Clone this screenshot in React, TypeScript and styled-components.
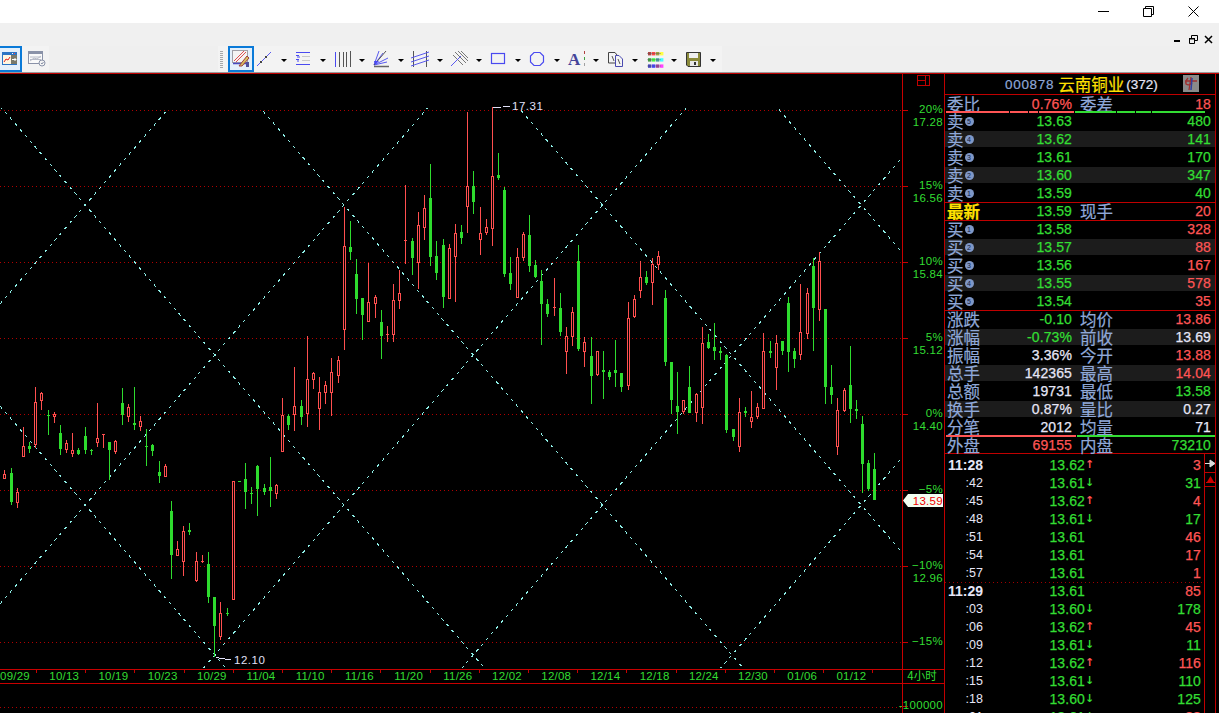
import React from "react";
import styled, { createGlobalStyle } from "styled-components";

const Global = createGlobalStyle`
  html, body { margin: 0; padding: 0; background: #000; overflow: hidden; }
  #root { width: 1219px; height: 713px; overflow: hidden; }
`;

const GREEN = "#33dd33";
const RED = "#ff5555";
const BLUE = "#8fa8d8";
const WHITE = "#e6e6f6";
const YELLOW = "#ffe000";

const Page = styled.div`
  width: 1219px;
  height: 713px;
  display: flex;
  flex-direction: column;
  background: #000;
  overflow: hidden;
  font-family: "Liberation Sans", "Noto Sans CJK SC", sans-serif;
`;
const TitleBar = styled.div`
  height: 23px;
  background: #fff;
  display: flex;
  justify-content: flex-end;
  align-items: center;
  padding-right: 20px;
  gap: 34px;
  flex: none;
`;
const MenuBar = styled.div`
  height: 23px;
  background: #f0f0f0;
  display: flex;
  justify-content: flex-end;
  align-items: flex-start;
  padding: 12px 6px 0 0;
  box-sizing: border-box;
  gap: 6px;
  flex: none;
`;
const ToolBar = styled.div`
  height: 26px;
  background: #efefef;
  display: flex;
  flex: none;
`;
const LeftTools = styled.div`
  width: 49px;
  background: #f3f3f3;
  display: flex;
  align-items: center;
`;
const RightTools = styled.div`
  margin-left: 169px;
  width: 504px;
  background: #f3f3f3;
  display: flex;
  align-items: center;
`;
const ActiveBox = styled.div<{ $w: number }>`
  width: ${(p) => p.$w}px;
  height: 26px;
  box-sizing: border-box;
  border: 2px solid #0a7ad8;
  background: #e4f0fb;
  display: flex;
  align-items: center;
  justify-content: center;
  flex: none;
`;
const EdgeBox = styled(ActiveBox)`
  border-left: none;
`;
const PlainIcon = styled.div`
  width: 22px;
  height: 26px;
  margin-left: 4px;
  display: flex;
  align-items: center;
  justify-content: center;
`;
const Grip = styled.div`
  width: 3px;
  height: 17px;
  margin: 0 5px 0 2px;
  background: repeating-linear-gradient(#a8a8a8 0 1px, transparent 1px 2px);
`;
const ToolButton = styled.div`
  width: 39px;
  height: 26px;
  display: flex;
  align-items: center;
  flex: none;
`;
const ToolGlyph = styled.div`
  width: 20px;
  height: 20px;
  flex: none;
`;
const Caret = styled.span`
  width: 0;
  height: 0;
  margin: 2px 0 0 7px;
  border-left: 3px solid transparent;
  border-right: 3px solid transparent;
  border-top: 3px solid #000;
`;
const Rule = styled.div`
  height: 1px;
  background: #9a9a9a;
  flex: none;
`;
const Main = styled.div`
  flex: 1;
  display: flex;
  min-height: 0;
  border-top: 1px solid #c00000;
`;
const ChartSvg = styled.svg`
  width: 944px;
  height: 639px;
  display: block;
  flex: none;
  background: #000;
`;
const Side = styled.div`
  width: 270px;
  flex: none;
  border-left: 1px solid #c00000;
  border-right: 1px solid #c00000;
  display: flex;
  flex-direction: column;
  overflow: hidden;
  font-size: 14px;
`;
const Head = styled.div`
  height: 20px;
  flex: none;
  border-bottom: 1px solid #c00000;
  display: flex;
  align-items: center;
  padding-left: 60px;
  position: relative;
`;
const Code = styled.span`
  color: ${BLUE};
  font-size: 13.5px;
  letter-spacing: 0.7px;
  -webkit-text-stroke: 0.2px currentColor;
`;
const Name = styled.span`
  color: ${YELLOW};
  font-size: 16.5px;
  margin-left: 4px;
  font-family: "Noto Sans CJK SC", sans-serif;
  -webkit-text-stroke: 0.2px currentColor;
`;
const Count = styled.span`
  color: ${WHITE};
  font-size: 13.5px;
  margin-left: 2px;
  -webkit-text-stroke: 0.2px currentColor;
`;
const HeadIcon = styled.div`
  position: absolute;
  left: 238px;
  top: 1px;
  width: 16px;
  height: 17px;
`;
const Section = styled.div<{ $h: number; $line?: boolean; $shift?: boolean }>`
  height: ${(p) => p.$h}px;
  flex: none;
  box-sizing: border-box;
  ${(p) => (p.$line ? "border-bottom: 1px solid #c00000;" : "")}
  ${(p) => (p.$shift ? "> :first-child { margin-top: -1px; }" : "")}
  position: relative;
`;
const Row = styled.div<{ $alt?: boolean }>`
  height: 18px;
  position: relative;
  ${(p) =>
    p.$alt
      ? `background: linear-gradient(#1c1c1c, #1c1c1c) no-repeat; background-size: 100% 16px; background-position: 0 1px;`
      : ""}
`;
const RowInner = styled.div`
  display: grid;
  grid-template-columns: 127px 8px 50px 81px;
  align-items: center;
  height: 18px;
  line-height: 18px;
`;
const FirstCol = styled.div`
  display: flex;
  align-items: center;
  justify-content: space-between;
  padding-left: 2px;
`;
const Label = styled.span<{ $c?: string; $bold?: boolean }>`
  color: ${(p) => p.$c || BLUE};
  font-size: 16.5px;
  font-family: "Noto Sans CJK SC", sans-serif;
  font-weight: ${(p) => (p.$bold ? 700 : 400)};
  line-height: 18px;
  white-space: nowrap;
  -webkit-text-stroke: 0.2px currentColor;
`;
const Num = styled.span<{ $c: string }>`
  color: ${(p) => p.$c};
  font-size: 14px;
  letter-spacing: 0.1px;
  white-space: nowrap;
  text-align: right;
  -webkit-text-stroke: 0.25px currentColor;
`;
const Spacer = styled.span``;
const LevelLabel = styled.div`
  display: flex;
  align-items: center;
  gap: 1px;
`;
const Dot = styled.span`
  width: 9px;
  height: 9px;
  border-radius: 50%;
  background: #7f98c8;
  color: #10183a;
  font-size: 7px;
  line-height: 9px;
  text-align: center;
`;
const SplitBar = styled.div`
  position: absolute;
  left: 1px;
  right: 0;
  display: flex;
  height: 2px;
  gap: 1px;
`;
const Seg = styled.i<{ $c: string; $w: number }>`
  display: block;
  height: 2px;
  background: ${(p) => p.$c};
  width: ${(p) => p.$w}px;
  flex: none;
`;
const Ticks = styled.div`
  flex: 1;
  display: flex;
  min-height: 0;
  overflow: hidden;
`;
const TickList = styled.div`
  width: 259px;
  flex: none;
  padding-top: 2px;
`;
const TickRow = styled.div<{ $sep?: boolean }>`
  height: 18px;
  display: grid;
  grid-template-columns: 38px 102px 10px 106px;
  align-items: center;
  line-height: 18px;
  ${(p) =>
    p.$sep
      ? `background: repeating-linear-gradient(90deg, #a00000 0 1px, transparent 1px 4px) no-repeat 0 0 / 100% 1px;`
      : ""}
`;
const Time = styled.span<{ $main?: boolean }>`
  color: ${WHITE};
  text-align: right;
  font-size: ${(p) => (p.$main ? "14px" : "12.5px")};
  font-weight: ${(p) => (p.$main ? 700 : 400)};
`;
const Mark = styled.span<{ $c: string }>`
  color: ${(p) => p.$c};
  font-size: 11px;
  font-weight: 700;
  font-family: "DejaVu Sans", sans-serif;
`;
const ScrollCol = styled.div`
  flex: 1;
  border-left: 1px solid #c00000;
  display: flex;
  flex-direction: column;
`;
const ScrollCell = styled.div<{ $h: number }>`
  height: ${(p) => p.$h}px;
  flex: none;
  border-bottom: 1px solid #c00000;
  display: flex;
  align-items: center;
  justify-content: center;
`;

type C = [number, number, number, number, number, "r" | "g"];
const candles: C[] = [
  [4,470,479,474,478,"r"],[11,468,505,473,502,"g"],[17,488,508,492,502,"r"],[23,427,456,446,456,"r"],
  [29,442,453,446,449,"g"],[35,387,448,402,444,"r"],[41,392,410,393,400,"r"],[48,410,435,415,415,"g"],
  [54,412,423,414,416,"r"],[60,425,455,433,449,"g"],[66,440,453,443,449,"r"],[72,433,457,450,453,"r"],
  [78,448,455,450,454,"g"],[85,427,454,436,450,"g"],[91,449,455,450,450,"g"],[97,403,447,438,442,"r"],
  [103,434,448,434,434,"r"],[109,442,480,442,450,"g"],[115,440,454,441,451,"r"],[122,388,425,403,415,"g"],
  [128,404,422,407,416,"r"],[134,387,430,423,425,"g"],[140,416,431,421,426,"r"],[146,429,466,446,446,"g"],
  [152,444,456,445,451,"g"],[159,461,483,472,476,"g"],[165,464,476,466,476,"r"],[171,501,579,511,555,"g"],
  [177,541,556,549,555,"r"],[183,526,576,531,561,"r"],[189,523,535,530,532,"g"],[196,552,582,561,580,"r"],
  [202,555,563,561,561,"r"],[208,552,603,564,597,"g"],[214,597,657,597,626,"g"],[220,602,640,613,636,"r"],
  [227,608,616,613,613,"g"],[233,481,599,481,599,"r"],[239,481,481,481,481,"g"],[245,463,509,479,492,"g"],
  [251,487,504,493,493,"g"],[257,465,516,466,489,"g"],[264,484,495,488,492,"g"],[270,457,507,487,491,"g"],
  [276,484,499,485,493,"r"],[282,398,451,415,451,"r"],[288,414,430,416,425,"g"],[294,367,431,406,414,"r"],
  [301,400,425,406,417,"g"],[307,336,427,379,413,"r"],[313,372,389,373,379,"r"],[319,377,430,392,408,"r"],
  [325,381,404,385,392,"r"],[331,358,416,372,392,"r"],[338,356,383,360,375,"r"],[344,207,350,246,329,"r"],
  [350,221,260,247,252,"g"],[356,259,314,274,299,"g"],[362,298,340,298,315,"g"],[368,263,322,302,321,"r"],
  [375,295,318,297,303,"r"],[381,310,359,322,336,"g"],[387,326,342,334,334,"r"],[393,284,342,300,334,"r"],
  [399,270,309,293,300,"r"],[405,185,264,240,240,"r"],[412,238,275,241,258,"g"],[418,212,289,225,262,"r"],
  [424,195,240,208,227,"r"],[430,164,266,198,257,"g"],[436,241,280,256,273,"g"],[443,239,308,245,297,"g"],
  [449,244,299,248,298,"r"],[455,224,302,233,256,"r"],[461,225,244,232,238,"g"],[467,112,233,186,206,"r"],
  [473,171,214,186,202,"g"],[480,207,255,233,239,"r"],[486,219,235,227,232,"r"],[492,107,246,176,228,"r"],
  [498,153,180,175,178,"g"],[504,187,277,190,274,"g"],[510,257,290,273,284,"g"],[517,248,297,257,297,"r"],
  [523,232,261,234,257,"r"],[529,215,272,235,266,"g"],[535,260,278,265,277,"g"],[541,270,345,281,304,"g"],
  [547,299,317,304,314,"g"],[554,278,316,307,307,"r"],[560,293,336,308,332,"g"],[566,327,374,336,351,"r"],
  [572,307,346,312,336,"r"],[578,245,351,261,349,"g"],[584,337,367,342,351,"r"],[591,337,404,356,376,"g"],
  [597,351,376,351,374,"r"],[603,351,399,370,372,"g"],[609,370,380,372,377,"g"],[615,340,387,370,373,"g"],
  [621,373,392,373,387,"g"],[628,302,390,318,385,"r"],[634,295,318,299,316,"r"],[640,261,298,277,290,"r"],
  [646,271,285,277,283,"g"],[652,258,305,264,282,"r"],[658,251,270,256,264,"r"],[665,290,366,298,362,"g"],
  [671,362,414,362,400,"g"],[677,372,434,406,412,"g"],[683,400,414,400,411,"r"],[689,366,413,387,413,"g"],
  [696,393,422,394,412,"r"],[702,327,424,343,407,"r"],[708,334,349,342,348,"g"],[714,323,360,347,351,"g"],
  [720,347,360,351,353,"g"],[726,354,433,355,430,"g"],[733,429,441,429,437,"g"],[739,398,452,412,446,"r"],
  [745,407,417,411,413,"g"],[751,391,428,417,421,"r"],[757,403,419,407,416,"r"],[763,333,408,351,408,"r"],
  [770,341,358,351,353,"g"],[776,335,390,343,367,"r"],[782,341,355,341,351,"g"],[788,297,372,303,352,"g"],
  [794,348,368,351,359,"g"],[800,284,360,332,354,"r"],[807,288,339,293,333,"r"],[813,258,351,266,308,"g"],
  [819,252,321,261,309,"r"],[825,309,404,309,387,"g"],[831,365,404,387,395,"g"],[837,398,455,410,446,"r"],
  [844,388,412,390,410,"r"],[850,346,423,385,409,"g"],[856,400,419,409,411,"g"],[862,416,493,424,464,"g"],
  [868,460,491,463,489,"g"],[874,453,500,469,500,"g"],
];

const Candle = ({ c }: { c: C }) => {
  const [x, hi, lo, t, b, k] = c;
  const col = k === "r" ? "#ff4f4f" : "#2edc2e";
  if (t === b) {
    return (
      <g fill={col}>
        {lo > hi && <rect x={x} y={hi} width={1} height={lo - hi} />}
        <rect x={x - 1} y={t} width={3} height={1} />
      </g>
    );
  }
  if (k === "g") {
    return (
      <g fill={col}>
        <rect x={x} y={hi} width={1} height={lo - hi} />
        <rect x={x - 1} y={t} width={3} height={b - t} />
      </g>
    );
  }
  return (
    <g>
      <rect fill={col} x={x} y={hi} width={1} height={Math.max(0, t - hi)} />
      <rect fill={col} x={x} y={b} width={1} height={Math.max(0, lo - b)} />
      <rect x={x - 0.5} y={t + 0.5} width={2} height={b - t} fill="#000" stroke={col} strokeWidth={1} />
    </g>
  );
};

const SLOPE = 1.16;
const rising = [304, 604, 904, 1204, 1504, 1804];
const falling = [406, 106, -194, -494, -794, -1094];
const gridY = [110, 186, 262, 338, 414, 490, 566, 642, 707];
const tickY = [110, 186, 262, 338, 414, 490, 566, 642, 706];
const dates = ["09/29","10/13","10/19","10/23","10/29","11/04","11/10","11/16","11/20","11/26","12/02","12/08","12/14","12/18","12/24","12/30","01/06","01/12"];
const axis: [string, number][] = [
  ["20%",109],["17.28",122],["15%",185],["16.56",198],["10%",261],["15.84",274],["5%",337],["15.12",350],
  ["0%",413],["14.40",426],["−5%",489],["−10%",565],["12.96",578],["−15%",641],["-100000",705],
];

const AxisText = styled.text`
  font-family: "Liberation Sans", sans-serif;
  font-size: 11.5px;
  letter-spacing: 0.3px;
  text-anchor: end;
  fill: ${GREEN};
`;
const PriceTag = styled(AxisText)`
  fill: #f00000;
`;
const DateText = styled.text`
  font-family: "Liberation Sans", sans-serif;
  font-size: 11.5px;
  letter-spacing: 0.2px;
  text-anchor: middle;
  fill: ${GREEN};
`;
const PeakText = styled.text`
  font-family: "Liberation Sans", sans-serif;
  font-size: 11.5px;
  letter-spacing: 0.5px;
  fill: #e0e0f8;
`;
const SmallCjk = styled.text`
  font-family: "Noto Sans CJK SC", sans-serif;
  font-size: 11.5px;
  text-anchor: middle;
  fill: ${GREEN};
`;

const Chart = () => (
  <ChartSvg viewBox="0 74 944 639">
    <defs>
      <clipPath id="plot">
        <rect x="0" y="108" width="902" height="560" />
      </clipPath>
      <pattern id="reddots" width="4" height="1" patternUnits="userSpaceOnUse">
        <rect width="1" height="1" fill="#b00000" />
      </pattern>
    </defs>
    {gridY.map((y) => (
      <rect key={y} x="0" y={y} width="902" height="1" fill="url(#reddots)" />
    ))}
    <g clipPath="url(#plot)" stroke="#8ff0e8" strokeWidth="1" strokeDasharray="3 4.6" shapeRendering="crispEdges">
      {rising.map((c) => (
        <line key={c} x1={0} y1={c} x2={902} y2={c - 902 * SLOPE} />
      ))}
      {falling.map((d) => (
        <line key={d} x1={0} y1={d} x2={902} y2={d + 902 * SLOPE} />
      ))}
    </g>
    <g shapeRendering="crispEdges">
      {candles.map((c) => (
        <Candle key={c[0]} c={c} />
      ))}
    </g>
    <path d="M492.5 107.5H501M503 106.5H510" stroke="#e0e0f8" fill="none" shapeRendering="crispEdges" />
    <PeakText x="512" y="110">17.31</PeakText>
    <path d="M216 657.5L222 658.5H224L226 659.5H231" stroke="#e0e0f8" fill="none" shapeRendering="crispEdges" />
    <PeakText x="234" y="664">12.10</PeakText>

    <g fill="#c80000" shapeRendering="crispEdges">
      <rect x="902" y="74" width="1" height="639" />
      <rect x="0" y="669" width="944" height="1" />
      <rect x="0" y="683" width="944" height="1" />
      {tickY.map((y) => (
        <rect key={y} x="902" y={y} width="6" height="1" />
      ))}
      {dates.map((_, i) => (
        <rect key={i} x={36 + i * 49.2} y="669" width="1" height="4" />
      ))}
    </g>
    {dates.map((d, i) => (
      <DateText key={d} x={15 + i * 49.2} y="680">{d}</DateText>
    ))}
    {axis.map(([t, y]) => (
      <AxisText key={t} x="943" y={y + 4}>{t}</AxisText>
    ))}
    <path d="M903 500.5L908 494H943V507H908Z" fill="#f2fff2" />
    <PriceTag x="943" y="505">13.59</PriceTag>
    <SmallCjk x="922" y="680">4小时</SmallCjk>
    <path d="M917.5 75.5H929.5V85.5H917.5ZM917.5 80.5H925.5M925.5 75.5V85.5" fill="none" stroke="#c00000" shapeRendering="crispEdges" />
  </ChartSvg>
);

const sells: [string, string, string][] = [["⑤","13.63","480"],["④","13.62","141"],["③","13.61","170"],["②","13.60","347"],["①","13.59","40"]];
const buys: [string, string, string][] = [["①","13.58","328"],["②","13.57","88"],["③","13.56","167"],["④","13.55","578"],["⑤","13.54","35"]];
const DIGIT: Record<string, string> = { "①": "1", "②": "2", "③": "3", "④": "4", "⑤": "5" };
const stats: [string, string, string, string, string, string][] = [
  ["涨跌","-0.10",GREEN,"均价","13.86",RED],
  ["涨幅","-0.73%",GREEN,"前收","13.69",WHITE],
  ["振幅","3.36%",WHITE,"今开","13.88",RED],
  ["总手","142365",WHITE,"最高","14.04",RED],
  ["总额","19731",WHITE,"最低","13.58",GREEN],
  ["换手","0.87%",WHITE,"量比","0.27",WHITE],
  ["分笔","2012",WHITE,"均量","71",WHITE],
];
const ticks: [string, string, "u" | "d" | "", string, string, boolean?][] = [
  ["11:28","13.62","u","3",RED],[":42","13.61","d","31",GREEN],[":45","13.62","u","4",RED],[":48","13.61","d","17",GREEN],
  [":51","13.61","","46",RED],[":54","13.61","","17",RED],[":57","13.61","","1",RED],["11:29","13.61","","85",RED,true],
  [":03","13.60","d","178",GREEN],[":06","13.62","u","45",RED],[":09","13.61","d","11",GREEN],[":12","13.62","u","116",RED],
  [":15","13.61","d","110",GREEN],[":18","13.60","d","125",GREEN],[":21","13.61","d","88",RED],
];

const Level = ({ ch, d, price, vol, c, alt }: { ch: string; d: string; price: string; vol: string; c: string; alt: boolean }) => (
  <Row $alt={alt}>
    <RowInner>
      <FirstCol>
        <LevelLabel>
          <Label>{ch}</Label>
          <Dot>{DIGIT[d]}</Dot>
        </LevelLabel>
        <Num $c={GREEN}>{price}</Num>
      </FirstCol>
      <Spacer />
      <Spacer />
      <Num $c={c}>{vol}</Num>
    </RowInner>
  </Row>
);

const Pair = ({ a, aColor, aBold, v1, c1, b, v2, c2, alt }: { a: string; aColor?: string; aBold?: boolean; v1: string; c1: string; b: string; v2: string; c2: string; alt?: boolean }) => (
  <Row $alt={alt}>
    <RowInner>
      <FirstCol>
        <Label $c={aColor} $bold={aBold}>{a}</Label>
        <Num $c={c1}>{v1}</Num>
      </FirstCol>
      <Spacer />
      <Label>{b}</Label>
      <Num $c={c2}>{v2}</Num>
    </RowInner>
  </Row>
);

const Tool = ({ children }: { children: React.ReactNode }) => (
  <ToolButton>
    <ToolGlyph>
      <svg width="20" height="20" viewBox="0 0 20 20">{children}</svg>
    </ToolGlyph>
    <Caret />
  </ToolButton>
);

const DOT_COLORS = [
  ["#b04444", "#ff4444", "#a0a040", "#ffff44"],
  ["#44a044", "#44ff44", "#44a0a0", "#44ffff"],
  ["#4444c0", "#4444ff", "#a044a0", "#ff44ff"],
];

export default function App() {
  return (
    <Page>
      <Global />
      <TitleBar>
        <svg width="11" height="11" viewBox="0 0 11 11"><path d="M0 5.5H11" stroke="#000" /></svg>
        <svg width="11" height="11" viewBox="0 0 11 11"><path d="M.5 2.5H8.5V10.5H.5ZM2.5 2.5V.5H10.5V8.5H8.5" fill="none" stroke="#000" /></svg>
        <svg width="11" height="11" viewBox="0 0 11 11"><path d="M.5.5L10.5 10.5M10.5.5L.5 10.5" stroke="#000" /></svg>
      </TitleBar>
      <MenuBar>
        <svg width="9" height="9" viewBox="0 0 9 9"><rect x="0" y="5" width="6" height="2" /></svg>
        <svg width="9" height="9" viewBox="0 0 9 9"><path d="M.5 3.5H5.5V8.5H.5ZM2.5 3V.5H8.5V5.5H6" fill="none" stroke="#000" /><rect y="3" width="6" height="1.5" /></svg>
        <svg width="9" height="9" viewBox="0 0 9 9"><path d="M1 1L8 8M8 1L1 8" stroke="#000" strokeWidth="1.5" /></svg>
      </MenuBar>
      <ToolBar>
        <LeftTools>
          <EdgeBox $w={22}>
            <svg width="16" height="14" viewBox="0 0 16 14">
              <rect width="15" height="13" fill="#2a74c4" />
              <rect x="1" y="3" width="8" height="9" fill="#fff6e0" />
              <rect x="9" y="3" width="6" height="9" fill="#7a7a6a" />
              <path d="M2 10L4 7L6 8L8 5" stroke="#e02020" fill="none" />
              <path d="M10 7.5H14M12.5 6L14 7.5L12.5 9" stroke="#fff" fill="none" />
              <rect x="10" y="1" width="1" height="1" fill="#fff" /><rect x="12" y="1" width="1" height="1" fill="#f44" />
            </svg>
          </EdgeBox>
          <PlainIcon>
            <svg width="18" height="16" viewBox="0 0 18 16">
              <rect x=".5" y=".5" width="14" height="12" fill="#fafafa" stroke="#8a92a8" />
              <rect x="1" y="1" width="14" height="2" fill="#8a92a8" />
              <path d="M2 10L6 7L9 8L13 5M2 6H13M2 8.5H13" stroke="#b8bcc8" fill="none" />
              <circle cx="14" cy="12" r="3" fill="#f3f3f3" stroke="#8a92a8" />
              <path d="M13 12L14 13L15.5 11" stroke="#8a92a8" fill="none" />
            </svg>
          </PlainIcon>
        </LeftTools>
        <RightTools>
          <Grip />
          <ActiveBox $w={26}>
            <svg width="20" height="20" viewBox="0 0 20 20">
              <rect x="1.5" y="1.5" width="15" height="12" fill="#f4f4f4" stroke="#a0a0a8" />
              <path d="M3 12L13 2M5 13L15 3" stroke="#e05050" />
              <path d="M2 14.5H15" stroke="#4a4ac0" strokeWidth="1.5" />
              <path d="M8 17L16 7L18 9L11 17Z" fill="#d8c060" stroke="#a04040" />
              <rect x="15" y="13" width="3" height="5" fill="#50509a" />
            </svg>
          </ActiveBox>
          <Tool>
            <path d="M3 17L17 3" stroke="#5a5af0" />
            <rect x="6" y="12" width="2" height="2" fill="#444" />
            <rect x="11" y="7" width="2" height="2" fill="#444" />
          </Tool>
          <Tool>
            <path d="M3 3.5H17M3 15.5H17" stroke="#4a4af0" />
            <path d="M9 7.5H17M9 11.5H17" stroke="#c8c8c8" />
            <path d="M3 6.5H6M4 8H7M3 10.5H6M4 12H6" stroke="#4a4af0" />
          </Tool>
          <Tool>
            <path d="M3.5 3V18" stroke="#4a4af0" />
            <path d="M7.5 3V18M11.5 3V18M14.5 3V18M18.5 2V18" stroke="#555" />
          </Tool>
          <Tool>
            <path d="M3 17.5H18" stroke="#666" strokeWidth="1.5" />
            <path d="M3 16L8 2M3 16L12 4M3 16L17 9M3 16L16 13" stroke="#5a5af0" />
            <path d="M3 16L15 2" stroke="#555" />
            <path d="M3 12L8 12L4 16Z" fill="#4a4af0" />
          </Tool>
          <Tool>
            <path d="M3.5 2V18M16.5 2V18" stroke="#555" />
            <path d="M1 9L19 3M1 13L19 7M1 17L19 11" stroke="#5a5af0" />
          </Tool>
          <Tool>
            <path d="M6 3L17 14M9 2L19 12M4 6L14 16M12 2L19 9" stroke="#777" />
            <path d="M2 17L12 7" stroke="#5a5af0" />
          </Tool>
          <Tool>
            <rect x="3.5" y="4.5" width="13" height="10" fill="none" stroke="#4a4af0" strokeWidth="1.2" />
          </Tool>
          <Tool>
            <path d="M7 3.5H13L16.5 7V13L13 16.5H7L3.5 13V7Z" fill="none" stroke="#4a4af0" strokeWidth="1.2" />
          </Tool>
          <Tool>
            <text x="2" y="15.5" fontFamily="Liberation Serif" fontWeight="700" fontSize="17" fill="#44449a">A</text>
            <path d="M18.5 2V5" stroke="#b04040" /><path d="M18.5 8V11" stroke="#40a040" /><path d="M18.5 14V17" stroke="#a0a0a0" />
          </Tool>
          <Tool>
            <path d="M3.5 3.5H10L12 6V14H3.5Z" fill="#f4f4f4" stroke="#444" />
            <path d="M10.5 6.5H14L17.5 10V17.5H10.5Z" fill="#f4f4f4" stroke="#4a4ab0" />
            <path d="M7 7L9 12M13 10L15 15" stroke="#555" />
          </Tool>
          <Tool>
            {DOT_COLORS.map((row, r) =>
              row.map((c, i) => (
                <g key={`${r}-${i}`} fill={c}>
                  <rect x={4 + i * 4} y={3 + r * 6.2} width="3.4" height="3.4" />
                </g>
              ))
            )}
            <path d="M3 4.5H17M3 10.7H17M3 17H17" stroke="#555" strokeWidth=".4" />
          </Tool>
          <Tool>
            <path d="M3.5 3.5H17.5V17.5H5L3.5 16Z" fill="#8a8a3a" stroke="#333" />
            <rect x="6" y="4" width="9" height="5" fill="#eee" />
            <rect x="7" y="12" width="8" height="5" fill="#e8e8e8" />
            <rect x="11" y="13" width="2" height="3" fill="#333" />
          </Tool>
        </RightTools>
      </ToolBar>
      <Rule />
      <Main>
        <Chart />
        <Side>
          <Head>
            <Code>000878</Code>
            <Name>云南铜业</Name>
            <Count>(372)</Count>
            <HeadIcon>
              <svg width="16" height="17" viewBox="0 0 16 17">
                <rect width="16" height="17" fill="#8a8a8a" />
                <path d="M2 6H14M8 2L6 15M5 3Q2 6 3 9Q6 11 9 8" fill="none" stroke="#a03030" strokeWidth="1.3" />
                <path d="M9 3L8 15" stroke="#3040a0" strokeWidth="1.5" />
              </svg>
            </HeadIcon>
          </Head>
          <Section $h={18}>
            <Pair a="委比" v1="0.76%" c1={RED} b="委差" v2="18" c2={RED} />
            <SplitBar style={{ top: 16 }}>
              <Seg $c={RED} $w={63} /><Seg $c={RED} $w={18} /><Seg $c={RED} $w={9} /><Seg $c={RED} $w={35} />
              <Seg $c={GREEN} $w={41} /><Seg $c={GREEN} $w={18} /><Seg $c={GREEN} $w={15} /><Seg $c={GREEN} $w={53} />
            </SplitBar>
          </Section>
          <Section $h={90} $line $shift>
            {sells.map((s, i) => (
              <Level key={s[1]} ch="卖" d={s[0]} price={s[1]} vol={s[2]} c={GREEN} alt={i % 2 === 1} />
            ))}
          </Section>
          <Section $h={18} $line $shift>
            <Pair a="最新" aColor={YELLOW} aBold v1="13.59" c1={GREEN} b="现手" v2="20" c2={RED} />
          </Section>
          <Section $h={90} $line $shift>
            {buys.map((s, i) => (
              <Level key={s[1]} ch="买" d={s[0]} price={s[1]} vol={s[2]} c={RED} alt={i % 2 === 1} />
            ))}
          </Section>
          <Section $h={143} $line $shift>
            {stats.map((s, i) => (
              <Pair key={s[0]} a={s[0]} v1={s[1]} c1={s[2]} b={s[3]} v2={s[4]} c2={s[5]} alt={i % 2 === 1} />
            ))}
            <Pair a="外盘" v1="69155" c1={RED} b="内盘" v2="73210" c2={GREEN} />
            <SplitBar style={{ top: 124 }}>
              <Seg $c={RED} $w={130} /><Seg $c={GREEN} $w={139} />
            </SplitBar>
          </Section>
          <Ticks>
            <TickList>
              {ticks.map((t) => (
                <TickRow key={t[0]} $sep={t[5]}>
                  <Time $main={t[0].length > 3}>{t[0]}</Time>
                  <Num $c={GREEN}>{t[1]}</Num>
                  <Mark $c={t[2] === "u" ? RED : GREEN}>{t[2] === "u" ? "↑" : t[2] === "d" ? "↓" : ""}</Mark>
                  <Num $c={t[4]}>{t[3]}</Num>
                </TickRow>
              ))}
            </TickList>
            <ScrollCol>
              <ScrollCell $h={18}>
                <svg width="11" height="9" viewBox="0 0 11 9"><path d="M0 4.5H5M5 1V8L10 4.5Z" stroke="#ddd" fill="#ddd" /></svg>
              </ScrollCell>
              <ScrollCell $h={13}>
                <svg width="9" height="7" viewBox="0 0 9 7"><path d="M4.5 0L8 6H1Z" fill="#d00000" /><rect y="6" width="9" height="1" fill="#d00000" /></svg>
              </ScrollCell>
            </ScrollCol>
          </Ticks>
        </Side>
      </Main>
    </Page>
  );
}
